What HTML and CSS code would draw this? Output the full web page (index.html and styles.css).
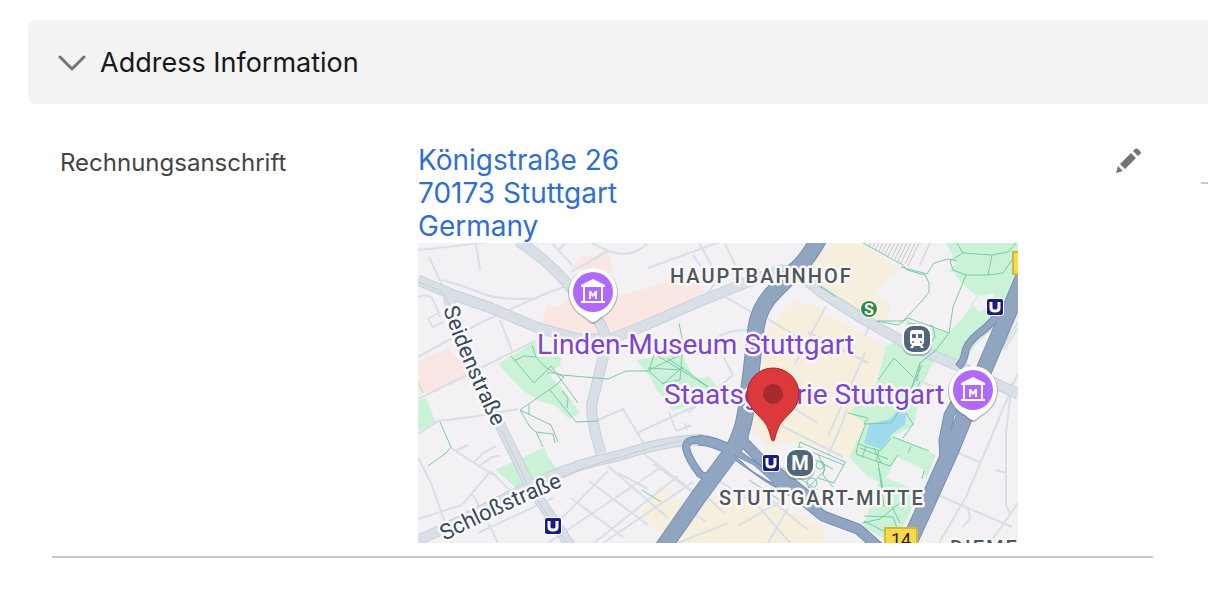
FILE: index.html
```html
<!DOCTYPE html>
<html lang="de">
<head>
<meta charset="utf-8">
<meta name="viewport" content="width=device-width, initial-scale=1">
<title>Address Information</title>
<link rel="stylesheet" href="styles.css">
</head>
<body>
<section class="section">
  <h2 class="section-header">
    <button class="section-toggle" type="button" aria-expanded="true" aria-controls="address-fields">
      <svg class="chevron" viewBox="0 0 28 18" aria-hidden="true"><path d="M2 3 14 15 26 3"/></svg>
      <span>Address Information</span>
    </button>
  </h2>
  <div class="fields" id="address-fields">
    <div class="field">
      <div class="field-label" id="billing-label">Rechnungsanschrift</div>
      <div class="field-value" aria-labelledby="billing-label">
        <a class="address" href="#map">Königstraße 26<br>70173 Stuttgart<br>Germany</a>
        <a class="map-link" id="map" href="#map" aria-label="Karte">
        <svg class="map" viewBox="0 0 600 300" role="img" aria-label="Königstraße 26, 70173 Stuttgart">
          <defs>
            <g id="museum">
              <path class="pin-shadow" d="M0 32C-3 32-5 29-8 27C-18 21-25 12-25 1A25 25 0 0 1 25 1C25 12 18 21 8 27C5 29 3 32 0 32Z"/>
              <path fill="#fff" d="M0 30C-3 30-5 27-8 25C-18 20-24 10-24 0A24 24 0 0 1 24 0C24 10 18 20 8 25C5 27 3 30 0 30Z"/>
              <circle r="20" fill="#b069fb"/>
              <path fill="#fff" d="M-12-5V-7L0-13 12-7V-5ZM-10-5H-8V9H-10ZM8-5H10V9H8ZM-12 9H12V11H-12ZM-4 7V-1H-2L0 2 2-1H4V7H2V3L0 5-2 3V7Z"/>
            </g>
            <g id="ubahn">
              <rect x="-9" y="-9" width="18" height="18" rx="3" fill="#fff"/>
              <rect x="-8" y="-8" width="16" height="16" rx="2" fill="#1b1b80"/>
              <path d="M-4-5V1Q-4 4 0 4T4 1V-5" fill="none" stroke="#fff" stroke-width="3"/>
            </g>
          </defs>
          <rect width="600" height="300" fill="#f3f1f3"/>
          <g class="business">
            <path d="M397 14 412 0H440L482 25 459 50 473 62 467 79 447 78 400 49 386 34ZM375 57 386 63 392 59 416 75 468 104 464 116 456 140 432 170 448 180 433 214 417 212 398 204 370 200 352 204 331 187 332 130 343 96ZM256 300 279 265 305 247 340 255 390 277 406 285V300ZM222 274 232 253 243 241 254 245 248 257 267 256 273 258 245 292Z"/>
          </g>
          <g class="medical">
            <path d="M153 25 165 12 176 14 189 4 193 17 194 30ZM124 77 129 62 141 65 154 53 177 79 195 55 203 52 277 32 286 49 258 64 232 78 200 93 176 94 150 91 127 83ZM0 118 31 105 54 134 0 153Z"/>
          </g>
          <g class="park">
            <path d="M80 121 117 99 143 115 142 123 129 130 145 146 162 170 151 176 138 163 122 158 104 147ZM218 117 263 110 276 136 292 134 303 150 255 168 249 158 239 148 232 134ZM527-1H600V33L584 60V79L558 101 547 118 518 115 504 141 496 182 475 193 518 212 506 241 483 288 468 297 445 284 461 239 450 234 431 214 448 180 431 170 458 141 468 103 490 95 485 62 492 80 531 90 545 75 559 53 530 29 539 20ZM0 158 8 155 18 180 0 188ZM77 227 127 204 130 214 142 230 140 237 100 246Z"/>
            <path class="ground" d="M457 50 484 25 536 29 550 50 530 88 500 78 475 76 472 62ZM479 214 505 226 508 238 501 248 468 235ZM560 53 578 50 568 65 561 69 555 62Z"/>
          </g>
          <path fill="#9edbed" d="M480 167 488 171 487 182 475 190 463 206 446 200 451 181 472 176Z"/>
          <g class="rail-yard">
            <path d="M453 0 451 3M457 0 455 4M461 0 458 6M465 0 461 8M469 0 464 9M473 0 467 11M477 0 470 13M481 0 474 14M485 0 477 16M489 0 480 18M493 0 483 20M497 0 487 21M501 0 490 23"/>
          </g>
          <g class="street">
            <path d="M0 7Q50 2 76-2M58 1 62 27M11 14 24 42M0 54Q12 49 16 59L22 74M10 76 22 69M10 76 15 84 25 79M24 37Q50 44 65 51 85 58 120 55M134 0 154 22M140 8 147 0M148 43 122 53 64 79 0 114M0 156 117 98M82 77 94 108M0 139 5 150M157 92 184 108M170-2 190 8 153 29M190 8Q213 16 229 1M230 25 310-4M280-2 300 34M275 12 296 42 288 52M307 1 324 36M301 50 343 75M295 94 315 132M298 95Q315 84 340 88M315 132 270 170M180 177 205 166 226 201M219 190 290 157M251 169 258 188M259 188 273 182M267 180 269 187M0 191 20 178 60 173 100 166M0 214 13 240 34 300M0 276 44 262 72 229M33 205 75 232M37 208 50 202M55 220 65 210 78 203M63 222 74 214 82 213M73 228 96 252M55 252 65 270 80 300M60 290 135 255M130 300 242 225M185 300 275 239M144 275 190 228M153 255 205 294M171 238 230 282M190 223 250 275M200 230 230 246M235 221 276 250M176 300 260 233M225 210 276 249M290 255 306 270M275 270 288 279M300 237 340 263 372 300M260 300 310 280M320 283 365 257M353 257 390 287M370 265 350 300M350 76 390 100M408 63 377 121M410 193 447 110M360 181 425 214M429 166 424 181 410 212M347 148 400 180M390 89 450 120M447 93 450 86M502 22 512 0M500 137 516 144M538 209 564 220M578 227 588 230M513 249 594 284M600 130 575 190 548 254 521 300M594 140 588 190V262L592 270M600 260 572 300M550 266 552 275 545 284M600 85 586 107M600 79 590 95Q584 108 577 107"/>
          </g>
          <g class="road-case">
            <path d="M0 37 33 51 73 65 118 84 160 96 193 96 235 79 278 60 335 37 363 27 379 29 403 49 445 76 489 101 545 125 600 151M100-2Q127 15 150 41L183 82Q190 95 186 111L174 160Q172 174 183 210M30 53 45 104 83 184 112 243 152 302M-2 298 28 285 70 264 125 237Q161 220 200 213 251 196 285 197"/>
          </g>
          <g class="road">
            <path d="M0 37 33 51 73 65 118 84 160 96 193 96 235 79 278 60 335 37 363 27 379 29 403 49 445 76 489 101 545 125 600 151M100-2Q127 15 150 41L183 82Q190 95 186 111L174 160Q172 174 183 210M30 53 45 104 83 184 112 243 152 302M-2 298 28 285 70 264 125 237Q161 220 200 213 251 196 285 197"/>
          </g>
          <path class="tram" d="M0 39Q26 47 28 55L33 65M84 188 112 247 149 300M145 235Q160 225 200 215 235 203 263 198"/>
          <g class="walkway">
            <path d="M93 113 116 140 133 123 160 160M96 118 106 113 118 114Q129 129 144 132L190 136 208 128 229 128 262 112M114 102 118 114M138 142 102 167 112 184 118 189 125 204M102 167 133 182 140 199M118 189 135 191 137 200M111 162 111 172M129 130 137 130 146 134 138 142M131 146 158 179 180 178M144 148 150 155 149 165M261 80 265 100 262 137 245 140M236 112 231 128 245 141 265 124M230 125 263 127 290 144M249 115 270 129 290 144M238 112 263 127M22 179 33 204 28 210 10 223M224 247 243 259M445 0 485 22 489 27 507 32 511 40 511 49 503 59 485 78 459 78M483 24 509 31 516 20 530 16 539 18M538-1 545 10 574 12 590 9 600-2M545 10 532 18 535 27 548 32 570 32 574 12M570 32 585 30 600 8M548 32 535 64 531 90 518 107 502 120 487 164M459 78 480 82 490 75 531 90M490 80 515 83 517 94 507 108M502 120 499 138 476 115 460 137M430 170 450 175 446 181M446 181 473 180 486 161 504 122M487 168 495 181 485 195M502 139 487 168M473 195 462 208 440 201 448 180M475 194 511 208M493 203 490 210M506 228 504 236M440 201 438 211 472 223 480 212M442 205 470 216M448 203 444 215M456 205 463 220M461 207 458 219M460 218 466 264M461 225 465 245 482 280M482 260 462 276 444 280M446 273 475 274 479 285M446 278 475 293M382 199 380 208 391 222M382 199 427 219M381 204 426 222M381 208 415 226M400 211 407 227 390 245M365 225 400 247M400 235 416 240 428 218M407 222 405 232 415 244M330 190 331 207M331 237 363 258M400 42 418 54M358 30 405-2"/>
            <circle cx="394" cy="240" r="5"/><circle cx="402" cy="222" r="4"/>
          </g>
          <g class="highway-case">
            <path class="wide" d="M403-8Q392 13 379 26L357 48Q341 63 338 85L333 130 328 167Q325 189 315 207L281 253 244 306M607 31 584 85 557 148 533 207 510 258 488 306"/>
            <path class="slim" d="M280 197Q298 198 313 208L350 234 375 249 405 273 440 286 464 307M321 194 340 214 371 238 402 263M543 151 531 172 526 197 527 220"/>
            <path class="branch" d="M588 60Q574 82 560 91 548 101 547 110 546 118 540 124"/>
            <path class="loop" d="M283 197Q268 195 268 205 271 217 282 231 292 239 305 219"/>
          </g>
          <g class="highway">
            <path class="wide" d="M403-8Q392 13 379 26L357 48Q341 63 338 85L333 130 328 167Q325 189 315 207L281 253 244 306M607 31 584 85 557 148 533 207 510 258 488 306"/>
            <path class="slim" d="M280 197Q298 198 313 208L350 234 375 249 405 273 440 286 464 307M321 194 340 214 371 238 402 263M543 151 531 172 526 197 527 220"/>
            <path class="branch" d="M588 60Q574 82 560 91 548 101 547 110 546 118 540 124"/>
            <path class="loop" d="M283 197Q268 195 268 205 271 217 282 231 292 239 305 219"/>
          </g>
          <path class="median" d="M316 212 336 222 356 240 350 238 334 228Z"/>
          <path fill="#f3f1f3" d="M275 203 299 210 289 226 283 224Z"/>

          <g class="district">
            <text x="252" y="40">HAUPTBAHNHOF</text>
            <text x="301" y="262">STUTTGART-MITTE</text>
            <text x="532" y="312">DIEME</text>
          </g>
          <path id="seiden" d="M25 66Q44 122 80 194" fill="none"/>
          <path id="schloss" d="M27 298Q80 270 150 241" fill="none"/>
          <g class="street-name">
            <text><textPath href="#seiden">Seidenstraße</textPath></text>
            <text><textPath href="#schloss">Schloßstraße</textPath></text>
          </g>
          <use href="#museum" x="175" y="49"/>
          <use href="#museum" x="555" y="147"/>
          <g class="place">
            <text x="119" y="111">Linden-Museum Stuttgart</text>
            <text x="246" y="161">Staatsgalerie Stuttgart</text>
          </g>
          <use href="#ubahn" x="577" y="64"/>
          <use href="#ubahn" x="353" y="220"/>
          <use href="#ubahn" x="135" y="283"/>
          <g class="sbahn"><circle cx="451" cy="66" r="9" fill="#fff"/><circle cx="451" cy="66" r="8" fill="#2a8c46"/><text x="451" y="72">S</text></g>
          <g class="station">
            <rect class="station-shadow" x="484" y="83" width="30" height="30" rx="11"/>
            <rect x="484" y="81" width="30" height="30" rx="11" fill="#fff"/>
            <rect x="486" y="83" width="26" height="26" rx="9" fill="#50667a"/>
            <path fill="#fff" d="M495 87H503Q506 87 506 90V99Q506 101 504 102L506 105H503L502 103H496L495 105H492L494 102Q492 101 492 99V90Q492 87 495 87Z"/>
            <path fill="#50667a" d="M494 91H498V95H494ZM500 91H504V95H500Z"/><circle cx="495" cy="99" r="1" fill="#50667a"/><circle cx="503" cy="99" r="1" fill="#50667a"/>
            <rect class="station-shadow" x="367" y="207" width="30" height="30" rx="11"/>
            <rect x="367" y="205" width="30" height="30" rx="11" fill="#fff"/>
            <rect x="369" y="207" width="26" height="26" rx="9" fill="#50667a"/>
            <text x="382" y="227">M</text>
          </g>
          <g class="shield">
            <rect x="467" y="285" width="32" height="22"/><rect x="595" y="9" width="28" height="22"/>
            <text x="483" y="303">14</text>
          </g>
          <path d="M355 198C353 198 353 193 351 188C347 173 329 169 329 151A26 26 0 0 1 381 151C381 169 363 173 359 188C357 193 357 198 355 198Z" fill="#dc393c" stroke="#a92428" stroke-width="1"/>
          <circle cx="355" cy="151" r="10" fill="#a42b2f"/>
        </svg>
        </a>
      </div>
      <button class="edit" type="button" aria-label="Rechnungsanschrift bearbeiten">
        <svg viewBox="0 0 28 28" aria-hidden="true"><path d="M1 27 3 20 8 25ZM5 18 16 7 21 12 10 23ZM18 5 20 3Q21 2 23 3L25 5Q27 7 25 8L23 10Z"/></svg>
      </button>
    </div>
    <div class="field field-next"></div>
  </div>
</section>
</body>
</html>
```
FILE: styles.css
```css
* { box-sizing: border-box; }
body { margin: 0; background: #fff; font-family: Inter, "Liberation Sans", sans-serif; color: #444; overflow-x: hidden; }
button { border: 0; padding: 0; background: none; font: inherit; color: inherit; cursor: pointer; }
a { text-decoration: none; }
.section { margin: 20px 0 0 28px; }
.section-header { margin: 0; background: #f3f3f3; border-radius: 8px 0 0 8px; font-size: 27px; font-weight: 400; line-height: 34px; color: #181818; }
.section-toggle { display: flex; align-items: center; gap: 14px; width: 100%; padding: 26px 30px 24px; text-align: left; }
.chevron { width: 28px; height: 18px; fill: none; stroke: #747474; stroke-width: 3; stroke-linecap: round; }
.fields { display: grid; grid-template-columns: minmax(0, 1fr) 7px; column-gap: 48px; align-items: start; padding: 20px 0 0 24px; }
.field { display: flex; align-items: flex-start; padding: 20px 10px 13px 8px; border-bottom: 2px solid #c9c9c9; }
.field-next { height: 60px; padding: 0; }
.field-label { flex: 0 0 358px; padding-top: 4px; font-size: 24px; line-height: 30px; color: #444; }
.field-value { flex: 1; min-width: 0; }
.address { display: block; font-size: 28px; line-height: 33px; color: #306fcf; }
.map-link { display: block; max-width: 600px; }
.map { display: block; width: 100%; height: auto; overflow: hidden; font-family: Roboto, sans-serif; }
.edit { width: 28px; height: 28px; margin-top: 2px; }
.edit svg { display: block; width: 28px; height: 28px; fill: #747474; }

.business { fill: #f7efdd; }
.medical { fill: #fae6e3; }
.park { fill: #c9f2d7; }
.park .ground { fill: #f3f1f3; }
.rail-yard { fill: none; stroke: #c5c5c7; stroke-width: 1; }
.street { fill: none; stroke: #d8dfe7; stroke-width: 2; }
.road-case, .road { fill: none; stroke-linejoin: round; }
.road-case { stroke: #c7d0da; stroke-width: 11; }
.road { stroke: #d8dfe7; stroke-width: 9; }
.tram { fill: none; stroke: #c9cbce; stroke-width: 1; }
.walkway { fill: none; stroke: #7bc9aa; stroke-width: 1; }
.highway-case, .highway { fill: none; stroke-linejoin: round; }
.highway-case { stroke: #7590b5; }
.highway { stroke: #90a5c0; }
.highway-case .wide { stroke-width: 17; }
.highway-case .slim { stroke-width: 11; }
.highway-case .branch, .highway-case .loop { stroke-width: 8; }
.highway .wide { stroke-width: 15; }
.highway .slim { stroke-width: 9; }
.highway .branch, .highway .loop { stroke-width: 6; }
.median { fill: #f3f1f3; stroke: #7590b5; }
.map text { paint-order: stroke; stroke-linejoin: round; }
.district { font-size: 20px; font-weight: 500; letter-spacing: 2px; fill: #50555a; stroke: #f8f8f9; stroke-width: 5; }
.street-name { font-size: 22px; fill: #35475a; stroke: #fafafb; stroke-width: 5; }
.place { font-size: 28px; fill: #7e43cf; stroke: #f8f7fa; stroke-width: 5; }
.pin-shadow, .station-shadow { fill: #666; opacity: 0.4; }
.sbahn text { font-size: 16px; font-weight: 700; fill: #fff; text-anchor: middle; }
.station text { font-size: 20px; font-weight: 700; fill: #fff; text-anchor: middle; }
.shield rect { fill: #fada4c; stroke: #d2b837; stroke-width: 2; }
.shield text { font-size: 18px; font-weight: 400; fill: #28251a; text-anchor: middle; }
```
